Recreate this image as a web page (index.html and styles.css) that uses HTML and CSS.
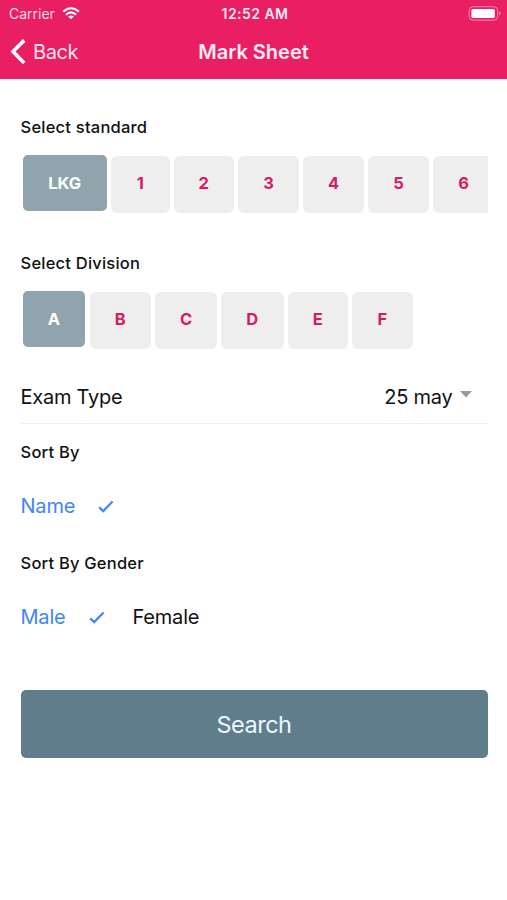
FILE: index.html
```html
<!DOCTYPE html>
<html lang="en">
<head>
<meta charset="utf-8">
<title>Mark Sheet</title>
<link rel="stylesheet" href="styles.css">
</head>
<body>
<header class="header">
  <div class="status">
    <div class="carrier"><span>Carrier</span>
      <svg class="wifi" width="18" height="13" viewBox="0 0 18 13" fill="none" stroke="#fff" stroke-width="2.2"><path d="M1.2 4.6Q9-2.2 16.8 4.6M4 7.7Q9 3.2 14 7.7"/><path d="M9 12.3 6.1 9.6Q9 7.3 11.9 9.6Z" fill="#fff" stroke="none"/></svg>
    </div>
    <span class="time">12:52 AM</span>
    <svg class="battery" width="33" height="15" viewBox="0 0 33 15"><rect x="1.2" y=".7" width="28.4" height="13.4" rx="3.6" fill="none" stroke="#f58bad" stroke-width="1"/><rect x="3.4" y="2.9" width="23.4" height="9" rx="1.5" fill="#fff"/><path d="M31 5.2q1.6.6 1.6 2.2T31 9.6z" fill="#f58bad"/></svg>
  </div>
  <nav class="nav">
    <a class="back"><svg width="17" height="26" viewBox="0 0 17 26" fill="none" stroke="#fff" stroke-width="3.6"><path d="M14.2 1.4 3 12.5l11.2 11.6"/></svg><span>Back</span></a>
    <h1 class="title">Mark Sheet</h1>
    <span></span>
  </nav>
</header>
<main class="content">
  <h2 class="label">Select standard</h2>
  <div class="tiles standards">
    <button class="tile active">LKG</button><button class="tile">1</button><button class="tile">2</button><button class="tile">3</button><button class="tile">4</button><button class="tile">5</button><button class="tile">6</button>
  </div>
  <h2 class="label">Select Division</h2>
  <div class="tiles divisions">
    <button class="tile active">A</button><button class="tile">B</button><button class="tile">C</button><button class="tile">D</button><button class="tile">E</button><button class="tile">F</button>
  </div>
  <div class="exam"><span>Exam Type</span><span class="value"><span>25 may</span><svg width="12" height="7" viewBox="0 0 12 7"><path d="M0 0h12L6 6.5z" fill="#999"/></svg></span></div>
  <h2 class="label sort">Sort By</h2>
  <div class="options name-options">
    <span class="option selected">Name</span>
    <svg class="check" width="16" height="13" viewBox="0 0 16 13" fill="none" stroke="#4285f4" stroke-width="2.2"><path d="m1.2 7.2 4 3.9L14.6 1.4"/></svg>
  </div>
  <h2 class="label gender">Sort By Gender</h2>
  <div class="options">
    <span class="option selected">Male</span>
    <svg class="check" width="16" height="13" viewBox="0 0 16 13" fill="none" stroke="#4285f4" stroke-width="2.2"><path d="m1.2 7.2 4 3.9L14.6 1.4"/></svg>
    <span class="option female">Female</span>
  </div>
  <button class="search">Search</button>
</main>
</body>
</html>
```

FILE: styles.css
```css
* { box-sizing: border-box; }
body { margin: 0; background: #fff; color: #111; font-family: Inter, sans-serif; }
button { border: 0; padding: 0; font-family: inherit; }
h1, h2 { margin: 0; }
svg { display: block; flex: none; }
.header { height: 79px; background: #e91e63; color: #fff; }
.status { height: 27px; padding: 0 6px 0 9px; display: grid; grid-template-columns: 1fr auto 1fr; align-items: center; font-size: 14px; }
.carrier { display: flex; align-items: center; gap: 7px; color: #ffdce8; }
.wifi { margin-top: -1px; }
.time { font-weight: 600; color: #ffe9f0; letter-spacing: .45px; }
.battery { justify-self: end; margin-top: -1px; }
.nav { height: 50px; padding: 0 10px; display: grid; grid-template-columns: 1fr auto 1fr; align-items: center; }
.back { display: flex; align-items: center; gap: 6px; font-size: 20px; letter-spacing: -.4px; color: #ffe4ec; }
.back svg { margin-top: -1px; }
.title { font-size: 20px; font-weight: 600; color: #ffedf3; }
.content { padding: 33px 19.5px 0 20.5px; }
.label { height: 30px; line-height: 30px; font-size: 16.5px; font-weight: 500; letter-spacing: .22px; }
.tiles { display: grid; column-gap: 4px; height: 59px; overflow: hidden; padding-left: 2.5px; }
.standards { grid-template-columns: 84px 58.5px 60.5px 61px 61px 61px 61px; margin: 12px 0 34.5px; }
.divisions { grid-template-columns: 62.5px 61.5px 62px 62.5px 60.5px 60.5px; margin-top: 12.5px; }
.tile { height: 57px; margin-top: 1.5px; padding-bottom: 3px; border-radius: 6px; background: #eee; color: #d81b60; font-size: 16.5px; font-weight: 700; }
.tile.active { margin: .5px .5px 0 0; padding: 0; border-radius: 5px; background: #90a4ae; color: #fff; height: 56.5px; }
.exam { margin-top: 21px; height: 54px; border-bottom: 1.5px solid #eee; display: flex; justify-content: space-between; align-items: center; font-size: 20px; letter-spacing: -.25px; }
.value { display: flex; align-items: center; gap: 7px; padding-right: 16px; }
.value svg { margin-top: -4px; }
.sort { margin-top: 13px; }
.options { height: 40px; display: flex; align-items: center; font-size: 20px; letter-spacing: -.2px; }
.name-options { margin-top: 19px; }
.selected { color: #4285f4; }
.check { margin-left: 23px; }
.gender { margin: 22px 0 19px; }
.female { margin-left: 28px; }
.search { display: block; width: 100%; height: 68px; margin-top: 53px; border-radius: 5px; background: #607d8b; color: #edf8ff; font-size: 23.5px; letter-spacing: -.5px; }
```
